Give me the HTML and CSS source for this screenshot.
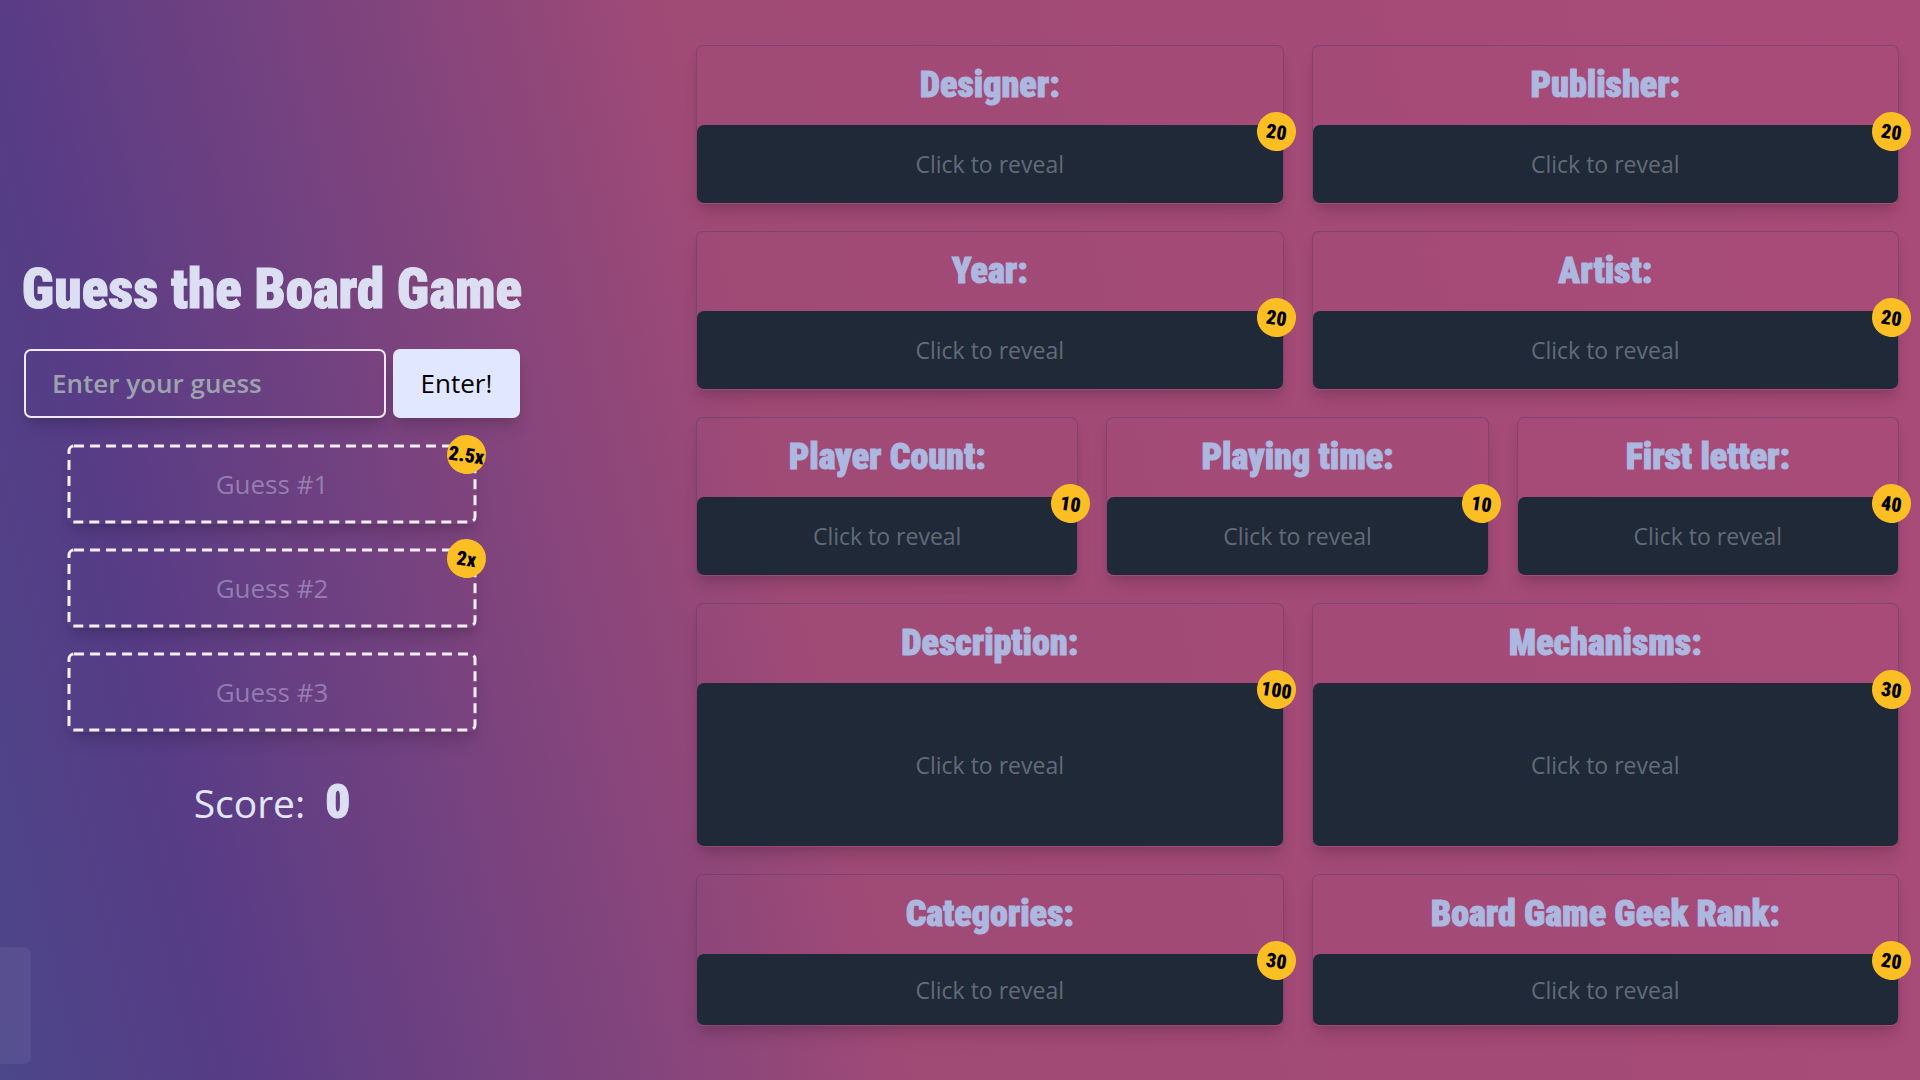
FILE: index.html
```html
<!DOCTYPE html>
<html lang="en">
<head>
<meta charset="utf-8">
<meta name="viewport" content="width=device-width, initial-scale=1">
<title>Guess the Board Game</title>
<link rel="stylesheet" href="styles.css">
</head>
<body>
<main class="game">
  <section class="play">
    <h1 class="title">Guess the Board Game</h1>
    <form class="guess-form">
      <input class="guess-input" type="text" placeholder="Enter your guess" aria-label="Enter your guess">
      <button class="guess-submit" type="button">Enter!</button>
    </form>
    <ol class="guesses">
      <li class="guess"><svg class="outline" aria-hidden="true"><rect width="100%" height="100%" rx="5"/></svg>Guess #1<span class="badge">2.5x</span></li>
      <li class="guess"><svg class="outline" aria-hidden="true"><rect width="100%" height="100%" rx="5"/></svg>Guess #2<span class="badge">2x</span></li>
      <li class="guess"><svg class="outline" aria-hidden="true"><rect width="100%" height="100%" rx="5"/></svg>Guess #3</li>
    </ol>
    <p class="score">Score: <span class="score-value">0</span></p>
  </section>

  <section class="hints">
    <article class="hint half"><h2 class="hint-title">Designer:</h2><button class="reveal" type="button">Click to reveal<span class="badge">20</span></button></article>
    <article class="hint half"><h2 class="hint-title">Publisher:</h2><button class="reveal" type="button">Click to reveal<span class="badge">20</span></button></article>
    <article class="hint half"><h2 class="hint-title">Year:</h2><button class="reveal" type="button">Click to reveal<span class="badge">20</span></button></article>
    <article class="hint half"><h2 class="hint-title">Artist:</h2><button class="reveal" type="button">Click to reveal<span class="badge">20</span></button></article>
    <article class="hint third"><h2 class="hint-title">Player Count:</h2><button class="reveal" type="button">Click to reveal<span class="badge">10</span></button></article>
    <article class="hint third"><h2 class="hint-title">Playing time:</h2><button class="reveal" type="button">Click to reveal<span class="badge">10</span></button></article>
    <article class="hint third"><h2 class="hint-title">First letter:</h2><button class="reveal" type="button">Click to reveal<span class="badge">40</span></button></article>
    <article class="hint half"><h2 class="hint-title">Description:</h2><button class="reveal tall" type="button">Click to reveal<span class="badge">100</span></button></article>
    <article class="hint half"><h2 class="hint-title">Mechanisms:</h2><button class="reveal tall" type="button">Click to reveal<span class="badge">30</span></button></article>
    <article class="hint half"><h2 class="hint-title">Categories:</h2><button class="reveal short" type="button">Click to reveal<span class="badge">30</span></button></article>
    <article class="hint half"><h2 class="hint-title">Board Game Geek Rank:</h2><button class="reveal short" type="button">Click to reveal<span class="badge">20</span></button></article>
  </section>
</main>
<div class="side-tab"></div>
</body>
</html>
```
FILE: styles.css
```css
:root {
  --display: "Roboto Condensed", "Liberation Sans Narrow", Roboto, sans-serif;
  --body: "Open Sans", "Noto Sans", sans-serif;
  --lift: 0 12px 18px -4px rgba(0, 0, 0, .14), 0 5px 7px -2px rgba(0, 0, 0, .08);
}

* {
  box-sizing: border-box;
  margin: 0;
  padding: 0;
}

body {
  min-height: 100vh;
  font-family: var(--body);
  font-size: 23px;
  line-height: 34px;
  color: #e0e7ff;
  background: linear-gradient(77deg, #4c468a 0%, #573c86 11%, #a04a76 42%, #a94b78 100%) fixed;
}

button,
input {
  font: inherit;
}

.game {
  display: grid;
  grid-template-columns: 496px 1fr;
  column-gap: 176px;
  min-height: 100vh;
  padding: 45px 21px 45px 24px;
}

.play {
  display: flex;
  flex-direction: column;
  align-items: center;
  justify-content: center;
  padding-top: 4px;
}

.title {
  font: 900 55px/74px var(--display);
  color: #dcdff2;
  white-space: nowrap;
  -webkit-text-stroke: 1px currentColor;
}

.guess-form {
  display: flex;
  gap: 7px;
  width: 100%;
  margin-top: 23px;
  font-size: 26px;
}

.guess-input {
  flex: 1;
  min-width: 0;
  height: 69px;
  padding: 0 26px;
  border: 2px solid #f0e8f8;
  border-radius: 7px;
  background: transparent;
  color: #e0e7ff;
  font-weight: 600;
  box-shadow: var(--lift);
}

.guess-input::placeholder {
  color: #9ca3af;
  opacity: 1;
}

.guess-submit {
  width: 127px;
  border: 0;
  border-radius: 7px;
  background: #e0e7ff;
  color: #000;
  box-shadow: var(--lift);
}

.guesses {
  display: flex;
  flex-direction: column;
  gap: 24px;
  width: 410px;
  margin-top: 26px;
  list-style: none;
}

.guess {
  position: relative;
  display: grid;
  place-items: center;
  height: 80px;
  border-radius: 7px;
  font-size: 26px;
  color: rgba(224, 231, 255, .38);
  box-shadow: var(--lift);
}

.outline {
  position: absolute;
  top: 2px;
  left: 2px;
  width: calc(100% - 4px);
  height: calc(100% - 4px);
  overflow: visible;
  fill: none;
  stroke: #f3eefa;
  stroke-width: 3;
  stroke-dasharray: 10 6;
}

.badge {
  position: absolute;
  top: -13px;
  right: -13px;
  display: grid;
  place-items: center;
  width: 39px;
  height: 39px;
  border-radius: 50%;
  background: #fbbf24;
  color: #000;
  font: 900 20px/24px var(--display);
  transform: rotate(8deg);
}

.guess .badge {
  top: -9px;
  right: -9px;
}

.score {
  display: flex;
  align-items: baseline;
  gap: 20px;
  margin-top: 40px;
  font-size: 39px;
  line-height: 60px;
}

.score-value {
  font: 900 49px/60px var(--display);
  color: #dcdff2;
  -webkit-text-stroke: 1px currentColor;
}

.hints {
  display: grid;
  grid-template-columns: repeat(6, 1fr);
  gap: 27px 28px;
  align-content: start;
}

.hint {
  border-radius: 7px;
  border: 1px solid rgba(70, 60, 100, .4);
  border-bottom-color: transparent;
  box-shadow: var(--lift);
}

.half {
  grid-column: span 3;
}

.third {
  grid-column: span 2;
}

.hint-title {
  font: 900 36px/79px var(--display);
  color: #adb8e0;
  text-align: center;
  -webkit-text-stroke: 1px currentColor;
}

.reveal {
  position: relative;
  display: block;
  width: 100%;
  height: 78px;
  border: 0;
  border-radius: 7px;
  background: #1f2937;
  color: #626b78;
}

.tall {
  height: 163px;
}

.short {
  height: 71px;
}

.side-tab {
  position: fixed;
  left: 0;
  bottom: 16px;
  width: 31px;
  height: 117px;
  border-radius: 0 7px 7px 0;
  background: rgba(255, 255, 255, .06);
}
```
